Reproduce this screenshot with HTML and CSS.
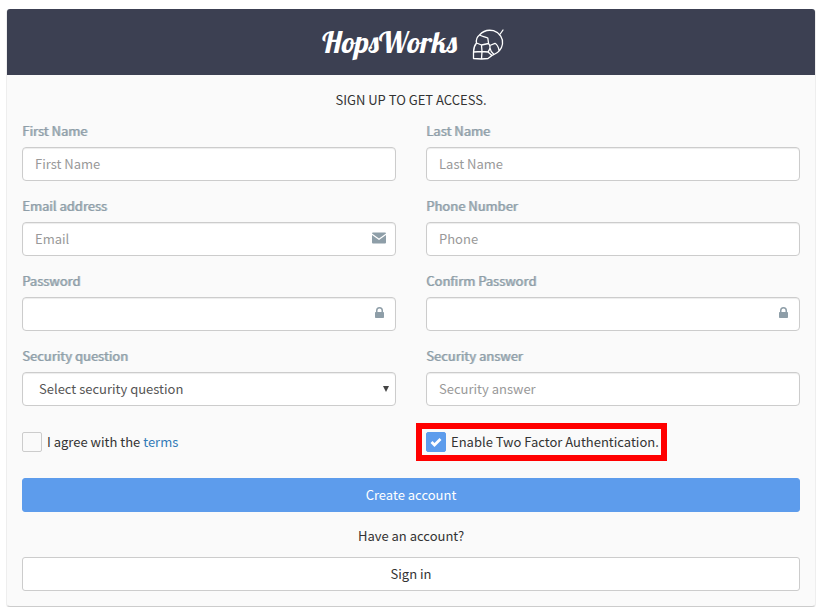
FILE: index.html
```html
<!DOCTYPE html>
<html lang="en">
<head>
<meta charset="utf-8">
<title>HopsWorks</title>
<link rel="stylesheet" href="styles.css">
</head>
<body>
<main class="panel">
  <header class="brand">
    <h1 class="brand-name">HopsWorks</h1>
    <svg class="brand-logo" viewBox="0 0 32 32" aria-hidden="true">
      <path d="M7.500 7C11 3 16 1.500 21.500 2.700c6.500 2 9.800 7.800 9 13.300-.800 5-4 8.500-8.500 10.500M27.500 7l3.500-5M7.500 7c2.500 1.500 5.500 1.500 8.300 3l.700 5M7.500 7C5 9 4 12.500 4.500 15M16.500 15.500l-7 1.500-5-2c-2 2.500-3 5.500-3 9M9.500 17l.500 6.500M1.500 24l8.500-.500 6 .500M16.500 15.500c2 2 2.500 4.500-.500 8.500M1.500 24v6.500l8 .500 6.500-.500 4-3-4-3.500M10 23.500L9.500 31M17.800 17.500l5.200-2.200c2.500 1.500 3.500 4 4 7M18 20c.300 2.500 1.500 4.500 4 6.500l-3 1.500"/>
    </svg>
  </header>
  <form class="signup">
    <p class="lead">SIGN UP TO GET ACCESS.</p>
    <div class="grid">
      <div class="field"><label for="first">First Name</label><input class="control" id="first" type="text" placeholder="First Name"></div>
      <div class="field"><label for="last">Last Name</label><input class="control" id="last" type="text" placeholder="Last Name"></div>
      <div class="field"><label for="email">Email address</label>
        <div class="with-icon"><input class="control" id="email" type="email" placeholder="Email">
          <svg class="icon" viewBox="0 0 14 14" aria-hidden="true"><path d="M1 1.500h12a1 1 0 0 1 1 1L7 7.500l-7-5a1 1 0 0 1 1-1zM0 4l7 5 7-5v7.500a1 1 0 0 1-1 1H1a1 1 0 0 1-1-1z"/></svg></div></div>
      <div class="field"><label for="phone">Phone Number</label><input class="control" id="phone" type="tel" placeholder="Phone"></div>
      <div class="field"><label for="password">Password</label>
        <div class="with-icon"><input class="control" id="password" type="password">
          <svg class="icon" viewBox="0 0 14 14" aria-hidden="true"><path d="M4 6V4.500a3.500 3.500 0 0 1 7 0V6h.200q.800 0 .800.800v4.400q0 .800-.800.800H3.800Q3 12 3 11.200V6.800Q3 6 3.800 6zm1.500 0h4V4.500a2 2 0 0 0-4 0z"/></svg></div></div>
      <div class="field"><label for="confirm">Confirm Password</label>
        <div class="with-icon"><input class="control" id="confirm" type="password">
          <svg class="icon" viewBox="0 0 14 14" aria-hidden="true"><path d="M4 6V4.500a3.500 3.500 0 0 1 7 0V6h.200q.800 0 .800.800v4.400q0 .800-.800.800H3.800Q3 12 3 11.200V6.800Q3 6 3.800 6zm1.500 0h4V4.500a2 2 0 0 0-4 0z"/></svg></div></div>
      <div class="field"><label for="question">Security question</label>
        <div class="with-icon"><select class="control select" id="question"><option>Select security question</option></select>
          <svg class="arrow" viewBox="0 0 6 6" aria-hidden="true"><path d="M0 0h6L3 6z"/></svg></div></div>
      <div class="field"><label for="answer">Security answer</label><input class="control" id="answer" type="text" placeholder="Security answer"></div>
      <div class="option"><input class="check" id="agree" type="checkbox"><label for="agree">I agree with the <a href="#terms">terms</a></label></div>
      <div class="option"><span class="highlight"><input class="check" id="twofactor" type="checkbox" checked><label for="twofactor">Enable Two Factor Authentication.</label></span></div>
    </div>
    <button class="button primary" type="submit">Create account</button>
    <p class="question">Have an account?</p>
    <button class="button" type="button">Sign in</button>
  </form>
</main>
</body>
</html>
```

FILE: styles.css
```css
* { box-sizing: border-box; }

body {
  margin: 9px 8px 6px 6px;
  background: #fff;
  color: #333;
  font: 13px/20px "Noto Sans CJK SC", "Noto Sans", sans-serif;
}

.panel {
  border: 1px solid #eee;
  border-top: 0;
  border-bottom-color: #ccc;
  border-radius: 4px;
  background: #fafafa;
  box-shadow: 0 1px 1px rgba(0, 0, 0, .05);
}

.brand {
  display: flex;
  justify-content: center;
  align-items: center;
  gap: 15px;
  height: 66px;
  padding-left: 4px;
  border-radius: 3px 3px 0 0;
  background: #3c4052;
  color: #fff;
}

.brand-name {
  margin: 0;
  font: 30px/40px Lobster, "Liberation Serif", serif;
}

.brand-logo {
  width: 32px;
  height: 32px;
  margin-top: 4px;
  fill: none;
  stroke: #fff;
  stroke-width: 1.3;
  stroke-linecap: round;
  stroke-linejoin: round;
}

.signup { padding: 15px; }

.lead, .question { margin: 0; text-align: center; }
.lead { margin-bottom: 11px; }
.question { margin: 14px 0 11px; }

.grid {
  display: grid;
  grid-template-columns: 1fr 1fr;
  gap: 15px 30px;
}

.field label {
  display: block;
  margin-bottom: 6px;
  color: #8e9ea8;
  text-shadow: 1px 0 rgba(142, 158, 168, .7);
}

.control {
  display: block;
  width: 100%;
  height: 34px;
  padding: 5px 12px 7px;
  border: 1px solid #ccc;
  border-radius: 4px;
  background: #fff;
  box-shadow: inset 0 1px 1px rgba(0, 0, 0, .075);
  color: #555;
  font: inherit;
}

.control::placeholder { color: #999; opacity: 1; }

.select { appearance: none; padding: 6px 16px; }

.with-icon { position: relative; }

.icon {
  position: absolute;
  top: 9px;
  right: 10px;
  width: 14px;
  height: 14px;
  fill: #8e9ea8;
}

.arrow {
  position: absolute;
  top: 14px;
  right: 7px;
  width: 6px;
  height: 6px;
  fill: #444;
  pointer-events: none;
}

.option {
  display: flex;
  align-items: center;
  height: 42px;
}

.option label { margin-left: 5px; }

.highlight {
  display: flex;
  align-items: center;
  margin-left: -10px;
  padding: 3px 2px 3px 4px;
  border: 6px solid #f00;
}

.check {
  appearance: none;
  flex: none;
  width: 20px;
  height: 20px;
  margin: 0;
  border: 1px solid #ccc;
  border-radius: 2px;
  background: #fafafa;
}

.check:checked {
  border-color: #5d9cec;
  background: #5d9cec url("data:image/svg+xml,%3Csvg xmlns='http://www.w3.org/2000/svg' viewBox='0 0 18 18'%3E%3Cpath d='M4.500 9l3 3 6-6' fill='none' stroke='white' stroke-width='2.800'/%3E%3C/svg%3E") center / 18px no-repeat;
}

a { color: #337ab7; text-decoration: none; }

.button {
  display: block;
  width: 100%;
  height: 34px;
  padding: 0;
  border: 1px solid #ccc;
  border-radius: 3px;
  background: #fff;
  color: #333;
  font: inherit;
}

.primary {
  margin-top: 15px;
  border-color: #5d9cec;
  background: #5d9cec;
  color: #fff;
}
```
